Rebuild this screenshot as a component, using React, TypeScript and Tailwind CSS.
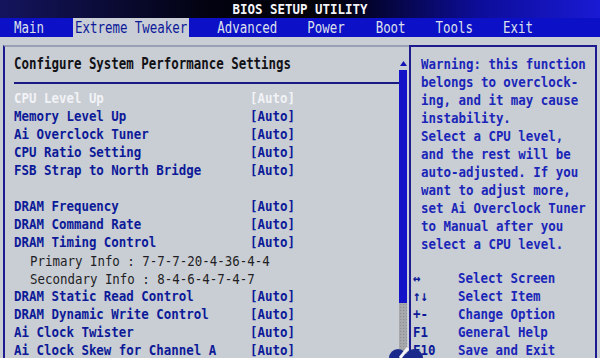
const rowsTop = [
  { label: "CPU Level Up", value: "[Auto]", active: true },
  { label: "Memory Level Up", value: "[Auto]" },
  { label: "Ai Overclock Tuner", value: "[Auto]" },
  { label: "CPU Ratio Setting", value: "[Auto]" },
  { label: "FSB Strap to North Bridge", value: "[Auto]" },
];

const rowsBottom = [
  { label: "DRAM Frequency", value: "[Auto]" },
  { label: "DRAM Command Rate", value: "[Auto]" },
  { label: "DRAM Timing Control", value: "[Auto]" },
  { info: "Primary Info : 7-7-7-20-4-36-4-4" },
  { info: "Secondary Info : 8-4-6-4-7-4-7" },
  { label: "DRAM Static Read Control", value: "[Auto]" },
  { label: "DRAM Dynamic Write Control", value: "[Auto]" },
  { label: "Ai Clock Twister", value: "[Auto]" },
  { label: "Ai Clock Skew for Channel A", value: "[Auto]" },
];

const help = [
  "Warning: this function",
  "belongs to overclock-",
  "ing, and it may cause",
  "instability.",
  "Select a CPU level,",
  "and the rest will be",
  "auto-adjusted. If you",
  "want to adjust more,",
  "set Ai Overclock Tuner",
  "to Manual after you",
  "select a CPU level.",
];

const legend = [
  { key: "↔", text: "Select Screen" },
  { key: "↑↓", text: "Select Item" },
  { key: "+-", text: "Change Option" },
  { key: "F1", text: "General Help" },
  { key: "F10", text: "Save and Exit" },
];

type Row = { label?: string; value?: string; info?: string; active?: boolean };

const SettingRow = ({ row }: { row: Row }) => {
  if (row.info) {
    return (
      <div className="h-[18px] leading-[18px] pl-[16px] text-[#1e1e24] whitespace-pre scale-y-[1.15]">{row.info}</div>
    );
  }
  const color = row.active ? "text-[#f2f3f6]" : "text-[#0c1a98]";
  return (
    <div className={`grid grid-cols-[236px_auto] h-[18px] leading-[18px] font-bold whitespace-pre scale-y-[1.12] ${color}`}>
      <span>{row.label}</span>
      <span>{row.value}</span>
    </div>
  );
};

export default function App() {
  return (
    <div
      className="relative w-[600px] h-[358px] overflow-hidden bg-[#c9cdd4] text-[12.45px]"
      style={{ fontFamily: '"DejaVu Sans Mono", "Liberation Mono", monospace' }}
    >
      {/* title */}
      <div className="h-[18px] leading-[18px] text-center text-[#f4f4f8] font-bold bg-[linear-gradient(90deg,#14145e_0%,#020210_35%,#000008_55%,#0d0d9a_80%,#1a1ad4_100%)]">
        <div className="scale-y-[1.2]">BIOS SETUP UTILITY</div>
      </div>

      {/* menu */}
      <div className="flex h-[19px] leading-[19px] bg-[#0c10c6] text-[#dde0ec] whitespace-pre">
        <span className="ml-[14px] inline-block scale-y-[1.25]">Main</span>
        <span className="ml-[29px] px-[2px] bg-[#c9cdd6] text-[#0c1a98]">
          <span className="inline-block scale-y-[1.25]">Extreme Tweaker</span>
        </span>
        <span className="ml-[28px] inline-block scale-y-[1.25]">Advanced</span>
        <span className="ml-[30px] inline-block scale-y-[1.25]">Power</span>
        <span className="ml-[31px] inline-block scale-y-[1.25]">Boot</span>
        <span className="ml-[30px] inline-block scale-y-[1.25]">Tools</span>
        <span className="ml-[30px] inline-block scale-y-[1.25]">Exit</span>
      </div>

      {/* body */}
      <div className="flex mt-[8px] h-[313px]">
        {/* left panel */}
        <div className="ml-[3px] w-[406px] flex border-l-2 border-t-2 border-l-[#1c1c90] border-t-[#9aa0b4]">
          <div className="w-[394px] pl-[9px] pt-[8px]">
            <div className="h-[18px] leading-[18px] font-bold text-[#121216] whitespace-pre scale-y-[1.25]">
              Configure System Performance Settings
            </div>
            <div className="mt-[9px] h-[2px] bg-[#1a1a86]" />
            <div className="mt-[6px]">
              {rowsTop.map((r) => (
                <SettingRow key={r.label} row={r} />
              ))}
              <div className="h-[18px]" />
              {rowsBottom.map((r, i) => (
                <SettingRow key={i} row={r} />
              ))}
            </div>
          </div>
          {/* scrollbar */}
          <div className="w-[8px] flex flex-col items-center pt-[14px]">
            <svg width="7" height="5" viewBox="0 0 7 5">
              <polygon points="3.5,0 7,5 0,5" fill="#1414b4" />
            </svg>
            <div className="mt-[4px] w-[8px] h-[233px] bg-[#1212c8]" />
            <div className="w-[8px] flex-1 bg-[#a6a8ac] bg-[radial-gradient(#8a8c90_1px,transparent_1px)] bg-[length:3px_3px]" />
          </div>
        </div>

        {/* right panel */}
        <div className="w-[188px] border-l-2 border-t-2 border-r-2 border-[#1c1c90]">
          <div className="pl-[10px] pt-[8px] font-bold text-[#1a26b8] whitespace-pre">
            {help.map((l) => (
              <div key={l} className="h-[18px] leading-[18px] scale-y-[1.2]">
                {l}
              </div>
            ))}
          </div>
          <div className="mt-[16px] pl-[2px] font-bold whitespace-pre">
            {legend.map((l) => (
              <div key={l.key} className="grid grid-cols-[45px_auto] h-[18px] leading-[18px] scale-y-[1.15]">
                <span className="text-[#0c1a98]">{l.key}</span>
                <span className="text-[#1a26b8]">{l.text}</span>
              </div>
            ))}
          </div>
        </div>
      </div>

      {/* watermark fragment */}
      <svg className="absolute left-[388px] top-[344px]" width="36" height="14" viewBox="0 0 36 14">
        <circle cx="10" cy="14" r="9" fill="#1a2a8c" />
        <circle cx="26" cy="14" r="9" fill="#1a2a8c" />
        <path d="M12 14 L20 4" stroke="#f4f4f8" strokeWidth="3" />
      </svg>
    </div>
  );
}
